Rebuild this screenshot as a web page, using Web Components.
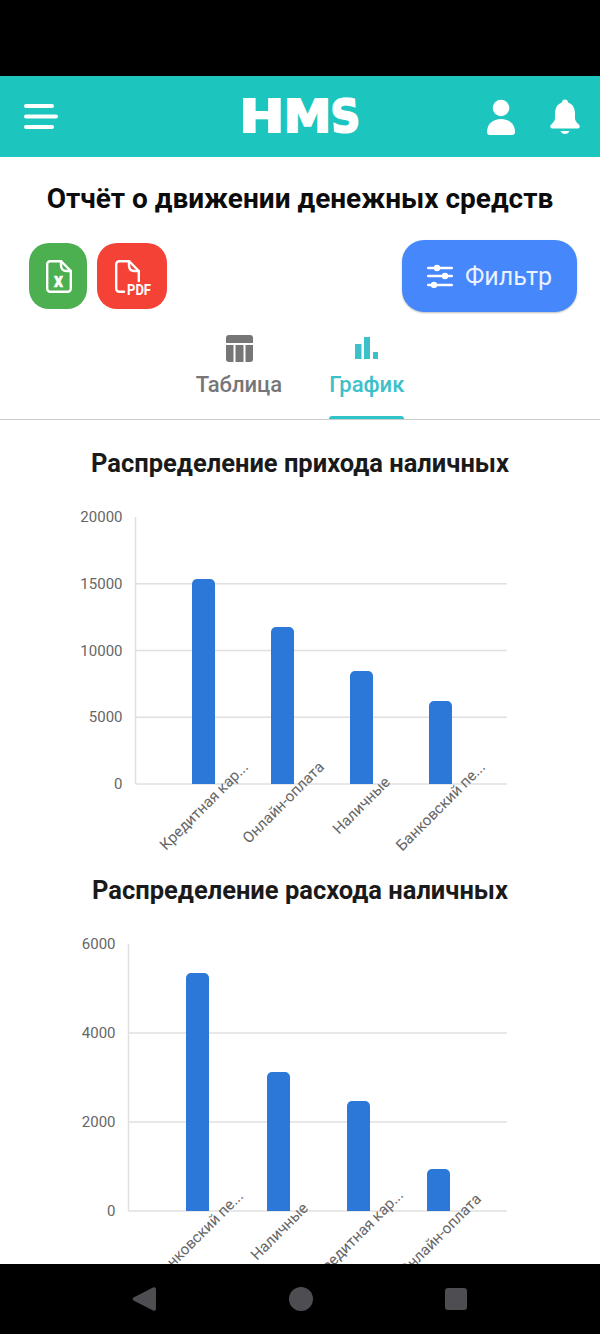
<!DOCTYPE html>
<html lang="ru">
<head>
<meta charset="utf-8">
<title>HMS</title>
<style>
  html, body { margin: 0; padding: 0; background: #000; }
  body { width: 600px; height: 1334px; overflow: hidden; display: flex; flex-direction: column; font-family: Roboto, "Liberation Sans", sans-serif; }
  main { flex: 1; min-height: 0; overflow: hidden; background: #fff; }
</style>
</head>
<body>
<status-bar></status-bar>
<app-header></app-header>
<main>
  <report-toolbar>Отчёт о движении денежных средств</report-toolbar>
  <report-tabs></report-tabs>
  <bar-chart class="first" data-max="20000" data-step="5000" data-left="135.500"
    data-items='[["Кредитная кар...",15350,203.5,249,768],["Онлайн-оплата",11760,282.5,325,768],["Наличные",8460,361.5,391,783],["Банковский пе...",6220,440.5,486,768]]'>Распределение прихода наличных</bar-chart>
  <bar-chart data-max="6000" data-step="2000" data-left="128.500"
    data-items='[["Банковский пе...",5348,197.5,244,1197],["Наличные",3124,278.5,309,1209],["Кредитная кар...",2472,358.5,404,1196],["Онлайн-оплата",944,438.5,482,1200]]'>Распределение расхода наличных</bar-chart>
</main>
<nav-bar></nav-bar>
<script>
class StatusBar extends HTMLElement {
    constructor() {
        super();
        this.attachShadow({ mode: 'open' });
    }

    connectedCallback() {
        this.shadowRoot.innerHTML = `<style>:host { display: block; height: 76px; background: #000; flex: none; }</style>`;
    }
}

class AppHeader extends HTMLElement {
    constructor() {
        super();
        this.attachShadow({ mode: 'open' });
    }

    connectedCallback() {
        this.shadowRoot.innerHTML = `
        <style>
          :host {
            display: grid;
            grid-template-columns: 1fr auto 1fr;
            align-items: center;
            height: 81px;
            flex: none;
            padding: 0 20px;
            box-sizing: border-box;
            background: #1cc5bd;
            color: #fff;
          }
          svg { display: block; fill: #fff; }
          .menu { margin-left: 4px; }
          .logo {
            display: flex;
            align-items: center;
            padding-left: 4px;
            font: 700 45px/1 "DejaVu Sans", sans-serif;
            -webkit-text-stroke: 2px #fff;
          }
          .logo span { display: block; }
          .h { transform: scaleX(1.2); }
          .m { transform: scaleX(1.06); margin: 0 -1.600px 0 4.750px; }
          .s { transform: scaleX(0.9) rotate(-4deg); }
          .right {
            display: flex;
            justify-content: flex-end;
            align-items: center;
            gap: 35px;
          }
        </style>
        <svg class="menu" width="34" height="26" viewBox="0 0 34 26">
          <rect x="0" y="0" width="30" height="4" rx="2"/>
          <rect x="0" y="10.500" width="34" height="4" rx="2"/>
          <rect x="0" y="21" width="30" height="4" rx="2"/>
        </svg>
        <div class="logo"><span class="h">H</span><span class="m">M</span><span class="s">S</span></div>
        <div class="right">
          <svg width="28" height="36" viewBox="0 0 28 36">
            <circle cx="14" cy="9" r="8.300"/>
            <path d="M0 33c0-8 6-13 14-13s14 5 14 13c0 2-1 3-3 3H3c-2 0-3-1-3-3z"/>
          </svg>
          <svg width="30" height="36" viewBox="0 0 30 36">
            <path d="M15 .5c1.800 0 3 1.200 3 3 5 1.500 7 6 7 11v5c0 2.500 2.500 4.500 4.200 6.500 1.200 1.500.5 3.500-1.500 3.500H2.300c-2 0-2.700-2-1.500-3.500C2.500 24 5 22 5 19.500v-5c0-5 2-9.500 7-11 0-1.800 1.200-3 3-3z"/>
            <path d="M10.500 32h9c-.8 2-2.500 3-4.500 3s-3.700-1-4.500-3z"/>
          </svg>
        </div>`;
    }
}

class ReportToolbar extends HTMLElement {
    constructor() {
        super();
        this.attachShadow({ mode: 'open' });
    }

    connectedCallback() {
        this.shadowRoot.innerHTML = `
        <style>
          :host { display: block; padding-top: 26px; }
          h1 {
            margin: 0;
            font: 700 28px/32px Roboto, "Liberation Sans", sans-serif;
            color: #0c0c0c;
            text-align: center;
            white-space: nowrap;
          }
          .row {
            display: flex;
            align-items: center;
            justify-content: space-between;
            height: 72px;
            margin-top: 25px;
            padding: 0 23px 0 29px;
          }
          .exports { display: flex; gap: 10px; }
          .exp {
            display: flex;
            align-items: center;
            justify-content: center;
            height: 66px;
            border-radius: 20px;
          }
          .xls { width: 58px; background: #4caf50; }
          .pdf { width: 70px; background: #f44336; }
          .exp svg { display: block; }
          .xls svg { margin-left: 2px; }
          .filter {
            display: flex;
            align-items: center;
            justify-content: center;
            gap: 12px;
            width: 175px;
            height: 72px;
            border-radius: 22px;
            background: #4687fb;
            color: #eaf1ff;
            font: 400 25px Roboto, "Liberation Sans", sans-serif;
            box-shadow: 0 1px 2px rgba(0,0,0,.25);
          }
        </style>
        <h1><slot></slot></h1>
        <div class="row">
          <div class="exports">
            <div class="exp xls">
              <svg width="30" height="36" viewBox="0 0 30 36" fill="none" stroke="#fff" stroke-width="2.400" stroke-linejoin="round" stroke-linecap="round">
                <path d="M17 3.200H6.200a3 3 0 0 0-3 3V30.800a3 3 0 0 0 3 3H23.800a3 3 0 0 0 3-3V13"/>
                <path d="M17 3.200 26.800 13"/>
                <path d="M17 3.200v4c0 3.500 2 5.800 5.500 5.800h4.300"/>
                <text x="14.500" y="28.500" text-anchor="middle" font-family="Roboto, 'Liberation Sans', sans-serif" font-weight="900" font-size="14" fill="#fff" stroke="#fff" stroke-width=".5">X</text>
              </svg>
            </div>
            <div class="exp pdf">
              <svg width="44" height="44" viewBox="0 0 44 44">
                <g fill="none" stroke="#fff" stroke-width="2.400" stroke-linejoin="round" stroke-linecap="round">
                  <path d="M19 7.200H9.200a3 3 0 0 0-3 3V34.800a3 3 0 0 0 3 3H14"/>
                  <path d="M19 7.200 28.800 17V27"/>
                  <path d="M19 7.200v4c0 3.500 2 5.800 5.500 5.800h4.300"/>
                </g>
                <text x="17" y="41" font-family="Roboto, 'Liberation Sans', sans-serif" font-weight="700" font-size="14" fill="#fff" textLength="24" lengthAdjust="spacingAndGlyphs">PDF</text>
              </svg>
            </div>
          </div>
          <div class="filter">
            <svg width="26" height="24" viewBox="0 0 26 24" fill="#fff">
              <rect x="0" y="2.800" width="26" height="2.400" rx="1.200"/>
              <rect x="0" y="10.800" width="26" height="2.400" rx="1.200"/>
              <rect x="0" y="19.800" width="26" height="2.400" rx="1.200"/>
              <circle cx="10" cy="4" r="3.200"/>
              <circle cx="18" cy="12" r="3.200"/>
              <circle cx="7" cy="21" r="3.200"/>
            </svg>
            <span>Фильтр</span>
          </div>
        </div>`;
    }
}

class ReportTabs extends HTMLElement {
    constructor() {
        super();
        this.attachShadow({ mode: 'open' });
    }

    connectedCallback() {
        this.shadowRoot.innerHTML = `
        <style>
          :host {
            display: flex;
            justify-content: center;
            gap: 47px;
            height: 108px;
            box-sizing: border-box;
            border-bottom: 1px solid #ccc;
          }
          .tab {
            display: flex;
            flex-direction: column;
            align-items: center;
            box-sizing: border-box;
            padding-top: 23px;
            color: #767676;
            font: 500 22px/24px Roboto, "Liberation Sans", sans-serif;
          }
          .tab svg { display: block; height: 27px; margin-bottom: 11px; }
          .table-icon { margin-left: 1px; }
          .active { color: #3cc0c9; }
          .bar {
            width: 100%;
            height: 3.500px;
            margin-top: auto;
            background: #2fc3ca;
            border-radius: 6px 6px 0 0;
          }
        </style>
        <div class="tab">
          <svg class="table-icon" width="27" height="27" viewBox="0 0 27 27" fill="#767676">
            <path d="M3 0h21a3 3 0 0 1 3 3v5H0V3a3 3 0 0 1 3-3z"/>
            <path d="M0 10h7.500v17H3a3 3 0 0 1-3-3z"/>
            <rect x="9.500" y="10" width="8" height="17"/>
            <path d="M19.500 10H27v14a3 3 0 0 1-3 3h-4.500z"/>
          </svg>
          <span>Таблица</span>
        </div>
        <div class="tab active">
          <svg width="23" height="27" viewBox="0 0 23 27" fill="#3cc0c9">
            <rect x="0" y="9" width="6.500" height="15"/>
            <rect x="9" y="2" width="6" height="22"/>
            <rect x="18" y="17" width="5" height="7"/>
          </svg>
          <span>График</span>
          <div class="bar"></div>
        </div>`;
    }
}

class BarChart extends HTMLElement {
    constructor() {
        super();
        this.attachShadow({ mode: 'open' });
    }

    connectedCallback() {
        const max = Number(this.dataset.max);
        const step = Number(this.dataset.step);
        const left = Number(this.dataset.left);
        const items = JSON.parse(this.dataset.items);
        const top = 39;
        const bottom = 306;
        const right = 507;
        // page y of the svg top, the label ends were read off the screenshot
        const originY = this.classList.contains('first') ? 478 : 905;

        let ticks = '';
        for (let v = 0; v <= max; v += step) {
            const y = bottom - (bottom - top) * v / max;
            // the top value has no grid line
            if (v < max) {
                ticks += `<line x1="${left}" x2="${right}" y1="${y}" y2="${y}" stroke="#e0e0e0" stroke-width="1.500"/>`;
            }
            ticks += `<text x="${left - 13}" y="${y + 5}" text-anchor="end" font-size="15" fill="#666">${v}</text>`;
        }

        let bars = '';
        for (const [label, value, cx, endX, endY] of items) {
            const h = (bottom - top) * value / max;
            const y = bottom - h;
            bars += `<path d="M${cx - 11.500} ${bottom}V${y + 5}a5 5 0 0 1 5-5h13a5 5 0 0 1 5 5V${bottom}z" fill="#2c78d8"/>`;
            bars += `<text transform="translate(${endX} ${endY - originY}) rotate(-45)" text-anchor="end" font-size="15.200" fill="#666">${label}</text>`;
        }

        this.shadowRoot.innerHTML = `
        <style>
          :host { display: block; }
          :host(.first) { padding-top: 28px; }
          h2 {
            margin: 0;
            font: 700 25.500px/30px Roboto, "Liberation Sans", sans-serif;
            color: #1a1a1a;
            text-align: center;
            white-space: nowrap;
          }
          svg { display: block; font-family: Roboto, "Liberation Sans", sans-serif; }
        </style>
        <h2><slot></slot></h2>
        <svg width="600" height="397" viewBox="0 0 600 397">
          <line x1="${left}" x2="${left}" y1="${top}" y2="${bottom}" stroke="#e0e0e0" stroke-width="1.500"/>
          ${ticks}
          ${bars}
        </svg>`;
    }
}

class NavBar extends HTMLElement {
    constructor() {
        super();
        this.attachShadow({ mode: 'open' });
    }

    connectedCallback() {
        this.shadowRoot.innerHTML = `
        <style>
          :host {
            display: flex;
            align-items: center;
            justify-content: space-between;
            height: 70px;
            flex: none;
            padding: 0 133px 0 132px;
            box-sizing: border-box;
            background: #000;
          }
          svg { display: block; fill: #4e4e52; }
        </style>
        <svg width="24" height="26" viewBox="0 0 24 26"><path d="M21 1.500 1.500 11.500a2 2 0 0 0 0 3L21 24.500a2 2 0 0 0 3-1.500V3a2 2 0 0 0-3-1.500z"/></svg>
        <svg width="24" height="24" viewBox="0 0 24 24"><circle cx="12" cy="12" r="12"/></svg>
        <svg width="22" height="22" viewBox="0 0 22 22"><rect width="22" height="22" rx="3"/></svg>`;
    }
}

customElements.define('status-bar', StatusBar);
customElements.define('app-header', AppHeader);
customElements.define('report-toolbar', ReportToolbar);
customElements.define('report-tabs', ReportTabs);
customElements.define('bar-chart', BarChart);
customElements.define('nav-bar', NavBar);
</script>
</body>
</html>
